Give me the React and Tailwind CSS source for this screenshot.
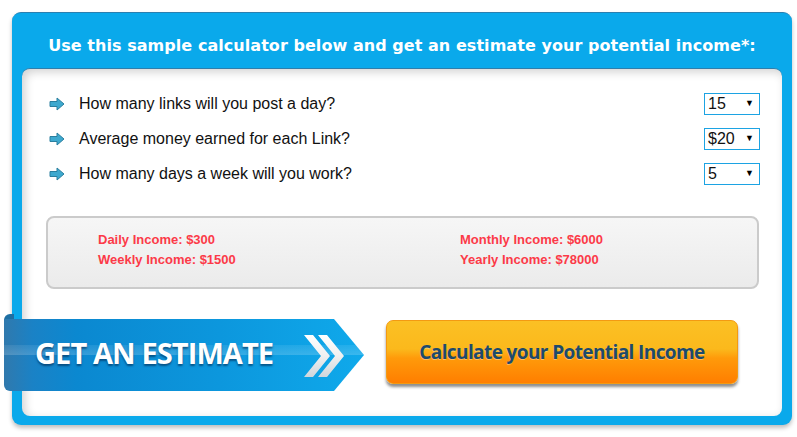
import React from 'react';

const questions = [
  { label: 'How many links will you post a day?', value: '15' },
  { label: 'Average money earned for each Link?', value: '$20' },
  { label: 'How many days a week will you work?', value: '5' },
];

const ArrowIcon = () => (
  <svg width="16" height="14" viewBox="0 0 16 14">
    <path d="M1 4.5h7V1l7 6-7 6V9.5H1z" fill="#3ea9cf" stroke="#2a7f9f" strokeWidth="1" />
  </svg>
);

const FakeSelect = ({ value }) => (
  <div className="w-[56px] h-[22px] border border-[#1ca3e3] bg-white flex items-center justify-between pl-[3px] pr-[5px] text-[16px] text-[#111] font-['Liberation_Sans',Arial,sans-serif]">
    <span>{value}</span>
    <span className="text-[9px] text-black">▼</span>
  </div>
);

const Ribbon = () => (
  <div className="absolute left-[4px] top-[314px] w-[360px] h-[77px]">
    {/* rolled tab at the top left */}
    <div className="absolute left-0 top-0 w-[10px] h-[14px] rounded-tl-[6px] bg-[#1e6fa3]" />
    <div className="absolute left-0 top-[5px] w-[360px] h-[72px] rounded-bl-[6px] bg-[linear-gradient(90deg,#3079ad_0%,#1a82c6_8%,#0b88d0_20%,#0c97dd_60%,#0fa9eb_100%)] [clip-path:polygon(0_0,330px_0,360px_36px,330px_72px,0_72px)]">
      <div className="absolute left-0 right-0 top-[26px] h-[10px] bg-[linear-gradient(180deg,rgba(255,255,255,0.08),rgba(255,255,255,0.18))]" />
      <div className="absolute left-[31px] top-[16px] text-[29px] leading-[36px] font-bold text-white tracking-[-0.9px] font-['Open_Sans',sans-serif] [text-shadow:0_2px_2px_rgba(0,40,80,0.6)]">
        GET AN ESTIMATE
      </div>
      <svg className="absolute left-[299px] top-[15px]" width="44" height="44" viewBox="0 0 44 44">
        <defs>
          <linearGradient id="chev" x1="0" y1="0" x2="0" y2="1">
            <stop offset="0" stopColor="#ffffff" />
            <stop offset="0.5" stopColor="#f0f0f0" />
            <stop offset="1" stopColor="#cfd6dc" />
          </linearGradient>
        </defs>
        <path d="M1 1h9l17 21-17 21H1l17-21z" fill="url(#chev)" />
        <path d="M15 1h9l17 21-17 21h-9l17-21z" fill="url(#chev)" />
      </svg>
    </div>
  </div>
);

export default function App() {
  return (
    <div className="relative w-[797px] h-[437px] bg-white">
      <div className="absolute left-[12px] top-[12px] w-[780px] h-[413px] rounded-[9px] bg-[#0aa9eb] border-t border-[#2a7fb0] shadow-[0_3px_4px_rgba(0,0,0,0.25)] flex flex-col">
        <div className="h-[55px] pt-[22px] flex justify-center">
          <h1 className="text-[16px] leading-[22px] font-bold text-white font-['DejaVu_Sans',Verdana,sans-serif] tracking-[0.05px]">
            Use this sample calculator below and get an estimate your potential income*:
          </h1>
        </div>
        <div className="mx-[10px] h-[348px] rounded-[8px] bg-white border-t border-[#2f7eab] shadow-[inset_3px_3px_10px_rgba(0,0,0,0.18)] relative">
          <div className="pt-[24px] pl-[27px] pr-[22px] flex flex-col gap-[13px]">
            {questions.map((q) => (
              <div key={q.label} className="flex items-center h-[22px]">
                <ArrowIcon />
                <span className="ml-[14px] flex-1 text-[16px] text-[#111] font-['Liberation_Sans',Arial,sans-serif]">
                  {q.label}
                </span>
                <FakeSelect value={q.value} />
              </div>
            ))}
          </div>

          <div className="mt-[31px] ml-[24px] mr-[23px] h-[73px] rounded-[8px] border-2 border-[#cbcbcb] bg-[linear-gradient(180deg,#f6f6f6,#ebebeb)] pl-[50px] pt-[14px] grid grid-cols-[362px_1fr] content-start gap-y-[4px] text-[13px] leading-[16px] font-bold text-[#fc3a48] font-['Liberation_Sans',Arial,sans-serif]">
            <span>Daily Income: $300</span>
            <span>Monthly Income: $6000</span>
            <span>Weekly Income: $1500</span>
            <span>Yearly Income: $78000</span>
          </div>

          <div className="mt-[31px] ml-[364px] w-[352px] h-[64px] rounded-[7px] border border-[#f39a12] bg-[linear-gradient(180deg,#fbc024_0%,#fbb91c_45%,#ff9a0a_60%,#ff7e00_100%)] shadow-[0_3px_3px_rgba(0,0,0,0.45)] flex items-center justify-center">
            <span className="text-[19px] font-bold text-[#1d4a6c] tracking-[-0.6px] font-['Open_Sans',sans-serif] [text-shadow:0_1px_0_rgba(255,255,255,0.35)]">
              Calculate your Potential Income
            </span>
          </div>
        </div>
      </div>
      <Ribbon />
    </div>
  );
}
